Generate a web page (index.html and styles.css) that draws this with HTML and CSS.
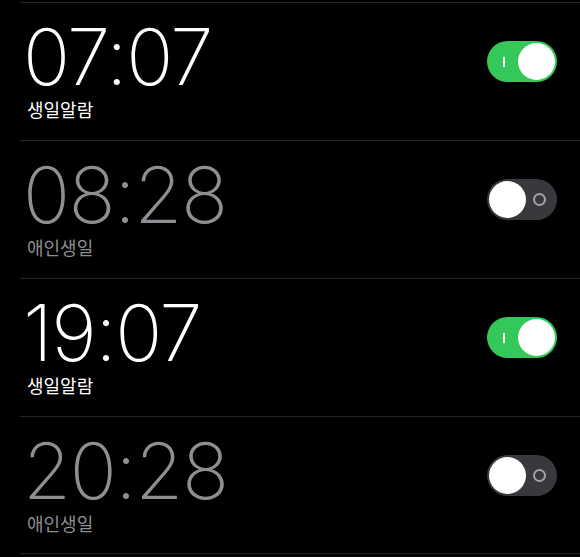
FILE: index.html
```html
<!DOCTYPE html>
<html lang="ko">
<head>
<meta charset="utf-8">
<link rel="stylesheet" href="styles.css">
</head>
<body>
<div class="list">
  <div class="row on">
    <div class="info">
      <div class="time">07:07</div>
      <div class="label">생일알람</div>
    </div>
    <div class="toggle on"><span class="mark"></span><span class="knob"></span></div>
  </div>
  <div class="row off">
    <div class="info">
      <div class="time">08:28</div>
      <div class="label">애인생일</div>
    </div>
    <div class="toggle off"><span class="knob"></span><span class="mark"></span></div>
  </div>
  <div class="row on">
    <div class="info">
      <div class="time">19:07</div>
      <div class="label">생일알람</div>
    </div>
    <div class="toggle on"><span class="mark"></span><span class="knob"></span></div>
  </div>
  <div class="row off">
    <div class="info">
      <div class="time">20:28</div>
      <div class="label">애인생일</div>
    </div>
    <div class="toggle off"><span class="knob"></span><span class="mark"></span></div>
  </div>
</div>
</body>
</html>
```
FILE: styles.css
```css
html, body {
  margin: 0;
  padding: 0;
  background: #000;
}
body {
  font-family: Inter, "Noto Sans CJK KR", sans-serif;
  width: 580px;
  height: 557px;
  overflow: hidden;
}
.list {
  padding-top: 2px;
  margin-left: 20px;
}
.row {
  display: flex;
  align-items: flex-start;
  justify-content: space-between;
  height: 138px;
  border-top: 1px solid #262628;
  padding-right: 23px;
  box-sizing: border-box;
}
.row:last-child {
  border-bottom: 1px solid #262628;
}
.info {
  padding-left: 3px;
  padding-top: 18px;
  display: flex;
  flex-direction: column;
}
.time {
  font-size: 78px;
  font-weight: 200;
  line-height: 72px;
  letter-spacing: -1.5px;
}
.label {
  font-family: "Noto Sans CJK KR", sans-serif;
  font-size: 18px;
  line-height: 24px;
  margin-top: 4px;
  padding-left: 4px;
}
.row.on .time, .row.on .label { color: #fff; }
.row.off .time, .row.off .label { color: #8e8e93; }
.toggle {
  margin-top: 38px;
  width: 70px;
  height: 41px;
  border-radius: 21px;
  display: flex;
  align-items: center;
  justify-content: space-between;
  box-sizing: border-box;
  padding: 0 2px;
}
.toggle.on {
  background: #34c759;
}
.toggle.off {
  background: #39393d;
}
.knob {
  width: 37px;
  height: 37px;
  border-radius: 50%;
  background: #fff;
}
.toggle.on .mark {
  width: 2px;
  height: 10px;
  background: #fff;
  margin-left: 14px;
}
.toggle.off .mark {
  width: 9px;
  height: 9px;
  border: 2px solid #a1a1a6;
  border-radius: 50%;
  margin-right: 9px;
}
```
